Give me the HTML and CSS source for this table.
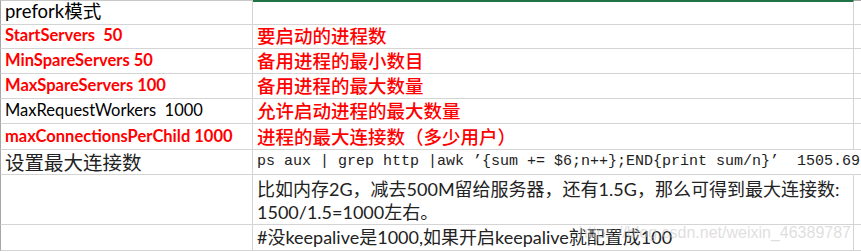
FILE: index.html
```html
<!DOCTYPE html>
<html lang="zh-CN">
<head>
<meta charset="utf-8">
<title>prefork模式</title>
<link rel="stylesheet" href="styles.css">
</head>
<body>
<div class="sheet">
  <div class="cell c1 first title">prefork模式</div>
  <div class="cell c2 first"></div>
  <div class="cell c3 first"></div>

  <div class="cell c1 key red">StartServers&nbsp;&nbsp;50</div>
  <div class="cell c2 note red">要启动的进程数</div>
  <div class="cell c3"></div>

  <div class="cell c1 key red">MinSpareServers 50</div>
  <div class="cell c2 note red">备用进程的最小数目</div>
  <div class="cell c3"></div>

  <div class="cell c1 key red">MaxSpareServers 100</div>
  <div class="cell c2 note red">备用进程的最大数量</div>
  <div class="cell c3"></div>

  <div class="cell c1 key plain">MaxRequestWorkers&nbsp;&nbsp;1000</div>
  <div class="cell c2 note red">允许启动进程的最大数量</div>
  <div class="cell c3"></div>

  <div class="cell c1 key red">maxConnectionsPerChild 1000</div>
  <div class="cell c2 note red">进程的最大连接数（多少用户）</div>
  <div class="cell c3"></div>

  <div class="cell c1 label">设置最大连接数</div>
  <div class="cell c2 cmd overflow">ps aux | grep http |awk ’{sum += $6;n++};END{print sum/n}’  1505.69</div>
  <div class="cell c3"></div>

  <div class="cell c1"></div>
  <div class="cell c2 text wrap">比如内存2G，减去500M留给服务器，还有1.5G，那么可得到最大连接数:<br>1500/1.5=1000左右。</div>
  <div class="cell c3"></div>

  <div class="cell c1"></div>
  <div class="cell c2 text">#没keepalive是1000,如果开启keepalive就配置成100</div>
  <div class="cell c3"></div>
</div>
<div class="watermark">https://blog.csdn.net/weixin_46389787</div>
</body>
</html>
```

FILE: styles.css
```css
html, body {
  margin: 0;
  padding: 0;
  background: #ffffff;
  overflow: hidden;
}

body {
  position: relative;
  width: 861px;
  height: 252px;
  font-family: "Lato", "Noto Sans CJK SC", sans-serif;
}

.sheet {
  display: grid;
  grid-template-columns: 253px 601px 7px;
  grid-template-rows: 25px 24px 25px 25px 25px 26px 25px 50px 26px;
}

.cell {
  box-sizing: border-box;
  border-bottom: 1px solid #d4d4d4;
  display: flex;
  align-items: flex-end;
  white-space: nowrap;
  min-width: 0;
}

.c1 {
  border-left: 1px solid #a6a6a6;
  border-right: 1px solid #d4d4d4;
  padding: 0 0 3px 4px;
}

.c2 {
  border-right: 1px solid #d4d4d4;
  padding: 0 0 3px 4px;
}

.c3 {
  padding: 0;
}

.first.c1 {
  border-top: 1px solid #c8c8c8;
}

.first.c2 {
  border-top: 2px solid #217346;
}

.first.c3 {
  border-top: 1px solid #a6a6a6;
}

.title {
  font-family: "Lato", "Noto Sans CJK SC", sans-serif;
  font-size: 18.5px;
  color: #000;
  padding-bottom: 1px;
}

.key {
  font-family: "Lato", "Noto Sans CJK SC", sans-serif;
  font-size: 16.5px;
  font-weight: 700;
}

.key.plain {
  font-weight: 400;
  color: #000;
}

.red {
  color: #ff0000;
}

.note {
  font-family: "Noto Sans CJK SC", sans-serif;
  font-size: 18.5px;
  font-weight: 500;
  line-height: 22px;
  padding-bottom: 2px;
}

.label {
  font-family: "Noto Sans CJK SC", sans-serif;
  font-size: 19.5px;
  color: #222;
  line-height: 22px;
  padding-bottom: 1px;
}

.cmd {
  font-family: "Liberation Mono", monospace;
  font-size: 15px;
  color: #222;
  padding-bottom: 4px;
  white-space: pre;
}

.overflow {
  overflow: visible;
  border-right-color: transparent;
}

.text {
  font-family: "Lato", "Noto Sans CJK SC", sans-serif;
  font-size: 18px;
  color: #222;
  line-height: 23px;
  padding-bottom: 1px;
}

.wrap {
  white-space: normal;
  display: block;
  padding-top: 3px;
}

.watermark {
  position: absolute;
  right: 10px;
  top: 224px;
  font-family: "Liberation Sans", sans-serif;
  font-size: 16px;
  color: rgba(190, 190, 190, 0.5);
  white-space: nowrap;
  pointer-events: none;
}
```
